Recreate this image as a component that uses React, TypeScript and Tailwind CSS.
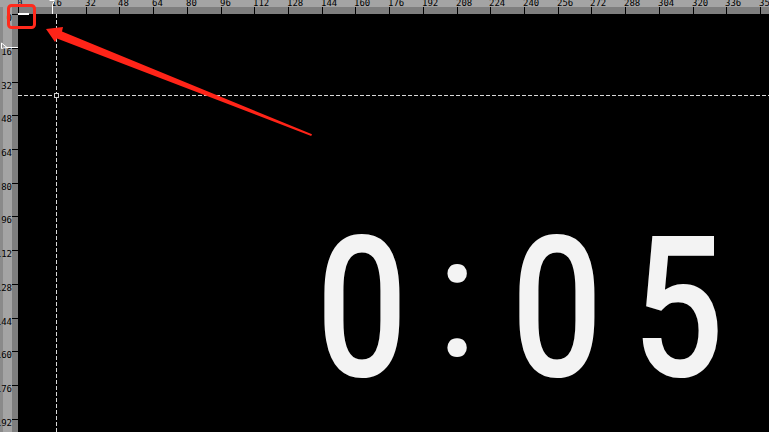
import React from "react";

const TOP_STEP = 33.71;
const LEFT_STEP = 33.7;
const topTicks = Array.from({ length: 23 }, (_, i) => i);
const leftTicks = Array.from({ length: 13 }, (_, i) => i);

function Corner() {
  return (
    <div className="w-[18px] h-[14px] shrink-0 flex flex-col">
      <div className="h-[7px] bg-[#a4a4a4]" />
      <div className="h-[7px] flex">
        <div className="w-[3px] bg-[#8a8a8a]" />
        <div className="w-[9px] bg-[#a4a4a4]" />
        <div className="w-[6px] bg-[#7e7e7e]" />
      </div>
    </div>
  );
}

function TopRuler() {
  return (
    <div className="flex-1 h-[14px] relative flex flex-col overflow-hidden">
      <div className="h-[7px] bg-[#a4a4a4]" />
      <div className="h-[7px] bg-[#7e7e7e]" />
      {topTicks.map((i) => {
        const x = 0.3 + i * TOP_STEP;
        return (
          <React.Fragment key={i}>
            <div
              className="absolute top-[7px] h-[7px] w-px bg-black"
              style={{ left: Math.round(x) }}
            />
            <div
              className="absolute top-[-1px] text-[9px] leading-[9px] text-black whitespace-nowrap"
              style={{ left: Math.round(x) - 1, fontFamily: '"DejaVu Sans Mono", monospace' }}
            >
              {i * 16}
            </div>
          </React.Fragment>
        );
      })}
    </div>
  );
}

function LeftRuler() {
  return (
    <div className="w-[18px] shrink-0 relative flex overflow-hidden">
      <div className="w-[3px] bg-[#8a8a8a]" />
      <div className="w-[9px] bg-[#a4a4a4]" />
      <div className="w-[6px] bg-[#7e7e7e]" />
      {leftTicks.map((i) => {
        const y = 0.2 + i * LEFT_STEP;
        return (
          <React.Fragment key={i}>
            <div
              className="absolute left-[12px] w-[6px] h-px bg-black"
              style={{ top: Math.round(y) }}
            />
            <div
              className="absolute right-[6px] text-[9px] leading-[9px] text-black whitespace-nowrap"
              style={{ top: Math.round(y), fontFamily: '"DejaVu Sans Mono", monospace' }}
            >
              {i * 16}
            </div>
          </React.Fragment>
        );
      })}
    </div>
  );
}

function Overlay() {
  return (
    <svg
      className="absolute inset-0 pointer-events-none"
      width={769}
      height={432}
      viewBox="0 0 769 432"
    >
      <line x1={56.5} y1={14} x2={56.5} y2={432} stroke="#d8d8d8" strokeWidth={1} strokeDasharray="4 2" />
      <line x1={18} y1={95.5} x2={769} y2={95.5} stroke="#d8d8d8" strokeWidth={1} strokeDasharray="4 2" />
      <rect x={54.5} y={93.5} width={4} height={4} fill="#000" stroke="#cfcfcf" strokeWidth={1} />
      <path d="M49.5 0.5 L54.5 0.5 L52.5 4.5 L52.5 14" fill="none" stroke="#ffffff" strokeWidth={1} />
      <path d="M1.5 43 L1.5 48.5 L7 47.5 L18 47.5 M1.5 43 L7 47.5" fill="none" stroke="#ffffff" strokeWidth={1} />
      <rect x={18} y={13} width={11} height={2} fill="#ffffff" />
      <rect x={8.5} y={5.5} width={26} height={22} rx={3} fill="none" stroke="#ff2a1c" strokeWidth={3} />
      <polygon
        points="46,29 63,27 62,31.5 312,134.3 311.2,136 57,38.5 55,42"
        fill="#ff2418"
      />
    </svg>
  );
}

export default function App() {
  return (
    <div
      className="w-[769px] h-[432px] bg-black relative overflow-hidden flex flex-col"
      style={{ fontFamily: 'Roboto, "Liberation Sans", sans-serif' }}
    >
      <div className="flex h-[14px] shrink-0">
        <Corner />
        <TopRuler />
      </div>
      <div className="flex flex-1 min-h-0">
        <LeftRuler />
        <div className="flex-1 bg-black pt-[197px] pl-[289px]">
          <div
            className="flex items-start text-[#f3f3f3]"
            style={{ fontFamily: 'Roboto, "Liberation Sans", sans-serif' }}
          >
            <span className="w-[104px] text-center text-[196px] font-medium leading-none scale-x-[0.82]">0</span>
            <span className="w-[92px] text-center text-[172px] font-normal leading-none">:</span>
            <span className="w-[92px] text-center text-[196px] font-medium leading-none scale-x-[0.82]">0</span>
            <span className="w-[167px] text-center text-[196px] font-medium leading-none scale-x-[0.82]">5</span>
          </div>
        </div>
      </div>
      <Overlay />
    </div>
  );
}
